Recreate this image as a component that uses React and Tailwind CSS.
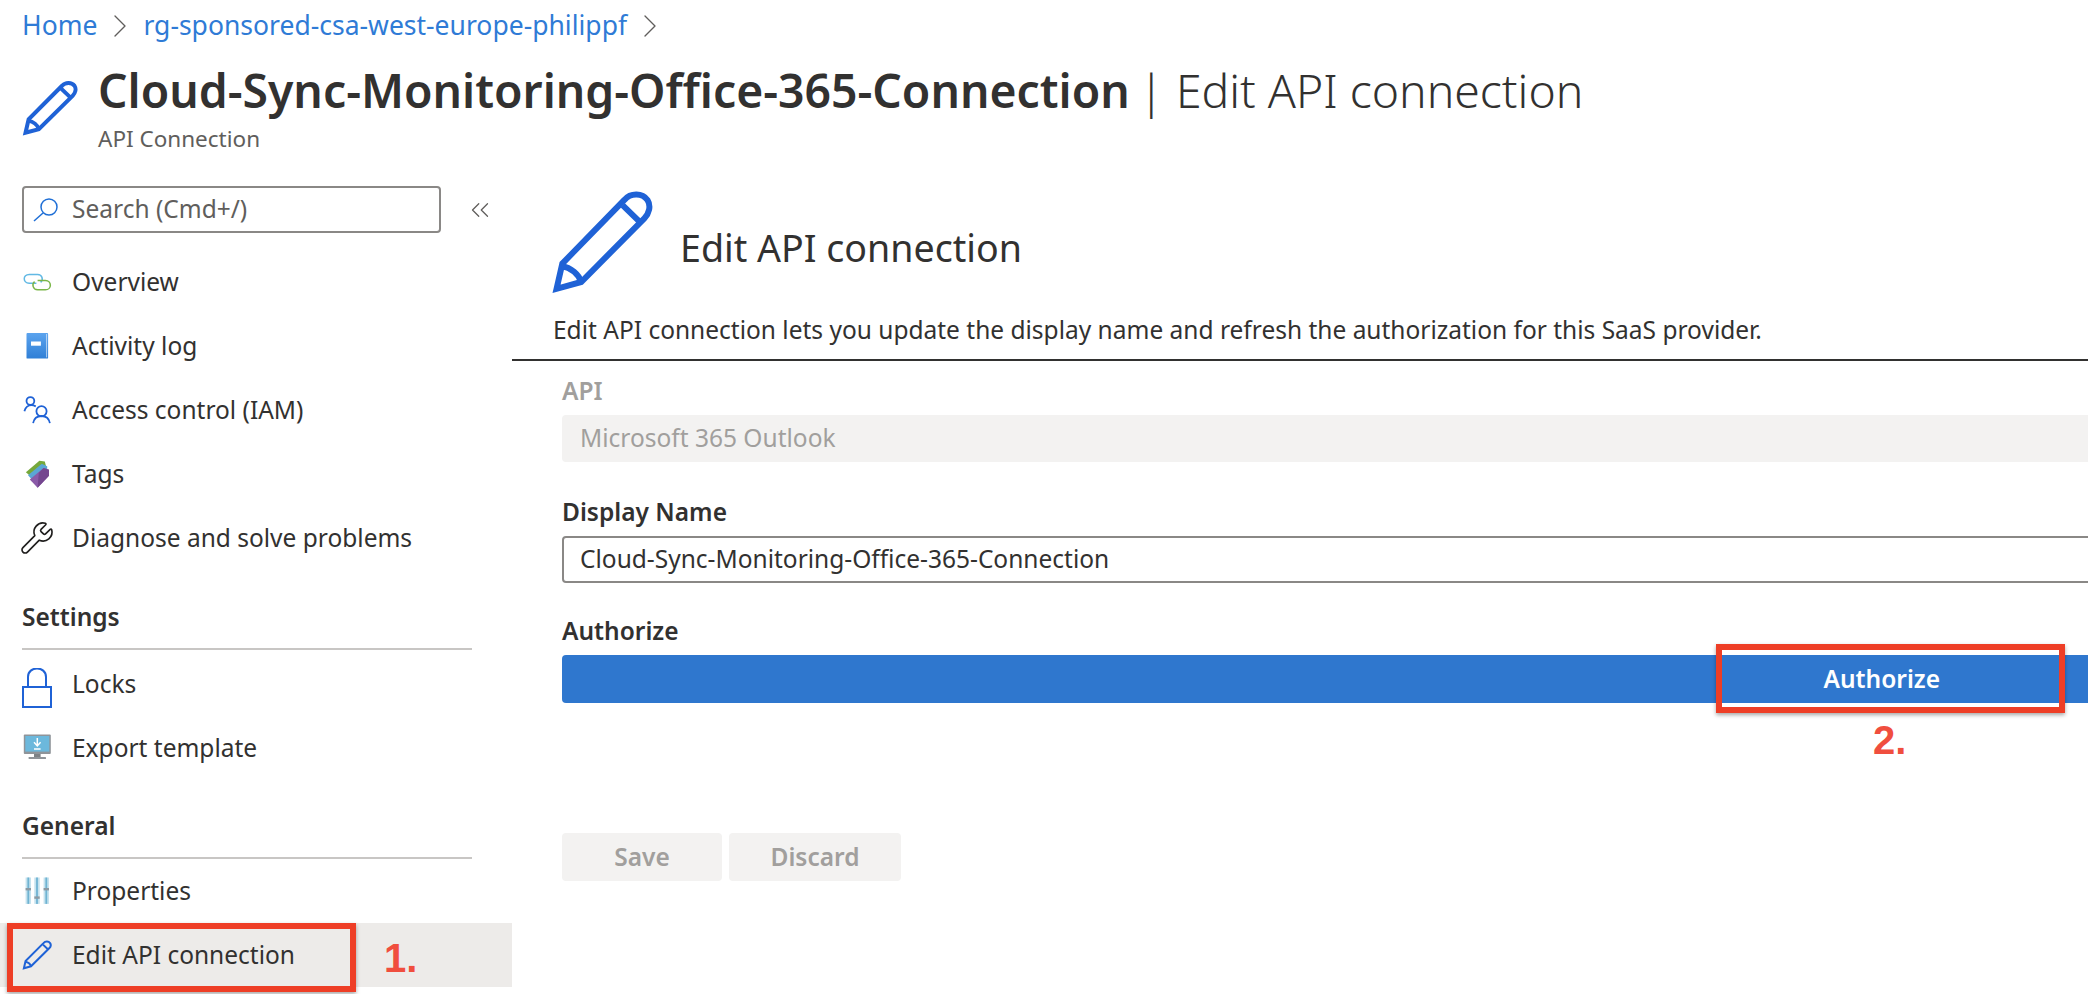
import React from 'react';
import { Wrench, ChevronRight, ChevronsLeft } from 'lucide-react';

// Pencil drawn with a non-scaling stroke so it can be reused at each size
const PencilIcon = ({ className, strokeWidth = 3 }) => (
  <svg className={className} viewBox="105 60 270 310" preserveAspectRatio="none" fill="none" stroke="#1f62d6" strokeWidth={strokeWidth} strokeLinejoin="miter">
    <path vectorEffect="non-scaling-stroke" d="M122 352 L137 278 L298 92 C315 70 345 72 358 92 C368 110 362 132 350 146 L186 332 Z" />
    <path vectorEffect="non-scaling-stroke" d="M294 108 L338 156 M135 285 C160 290 180 310 186 332" />
  </svg>
);

const LinkIcon = () => (
  <svg className="w-[30px] h-[30px]" viewBox="60 73 100 100" fill="none" strokeWidth="5">
    <path d="M108 127 H84 C62 127 62 98 84 98 H112 C128 98 132 116 122 124" stroke="#62b9e4" />
    <path d="M112 118 H138 C160 118 160 149 138 149 H112 C96 149 92 130 102 122" stroke="#7ab648" />
  </svg>
);

const BookIcon = () => (
  <svg className="w-[30px] h-[30px]" viewBox="60 265 100 100">
    <defs>
      <linearGradient id="book" x1="0" y1="0" x2="0" y2="1">
        <stop offset="0" stopColor="#5ba3ee" />
        <stop offset="1" stopColor="#2f7fd6" />
      </linearGradient>
    </defs>
    <rect x="75" y="272" width="72" height="85" rx="3" fill="url(#book)" />
    <path d="M142 275 V353" stroke="#fff" strokeWidth="2" />
    <rect x="90" y="300" width="33" height="14" fill="#fff" />
  </svg>
);

const UsersIcon = () => (
  <svg className="w-[30px] h-[30px]" viewBox="60 458 100 100" fill="none" stroke="#1f62d6" strokeWidth="6">
    <circle cx="88" cy="478" r="13" />
    <path d="M68 512 C72 498 80 492 92 492 C98 492 102 494 106 496" />
    <circle cx="125" cy="512" r="17" />
    <path d="M97 552 C100 536 110 528 125 528 C140 528 150 536 153 552" />
  </svg>
);

const TagsIcon = () => (
  <svg className="w-[30px] h-[30px]" viewBox="60 648 100 100">
    <path d="M73 692 L118 654 L136 656 L140 672 L96 712 Z" fill="#76a83a" />
    <path d="M80 702 L126 664 L144 672 L144 688 L102 726 Z" fill="#5aa6d4" />
    <path d="M86 716 L132 678 L150 684 L150 704 L112 744 Z" fill="#8a5aa8" />
    <path d="M112 744 L116 694 L132 678 L150 684 L150 704 Z" fill="#74468f" />
  </svg>
);

const LockIcon = () => (
  <svg className="w-[30px] h-10 mt-2" viewBox="66 265 90 120" fill="none" stroke="#1f62d6" strokeWidth="6">
    <rect x="69" y="322" width="84" height="60" />
    <path d="M84 322 V292 C84 258 138 258 138 292 V322" />
  </svg>
);

const ExportIcon = () => (
  <svg className="w-[30px] h-[30px]" viewBox="60 455 100 100">
    <rect x="66" y="460" width="90" height="65" rx="3" fill="#8f9499" />
    <rect x="71" y="465" width="80" height="52" fill="#6cb8dc" />
    <path d="M111 472 V496 M100 486 L111 498 L122 486 M100 508 H122" stroke="#fff" strokeWidth="5" fill="none" />
    <rect x="100" y="525" width="22" height="10" fill="#7d8286" />
    <rect x="82" y="535" width="58" height="7" rx="2" fill="#8f9499" />
  </svg>
);

const SlidersIcon = () => (
  <svg className="w-[30px] h-[30px]" viewBox="60 890 100 100">
    {[72, 101, 132].map((x, i) => (
      <g key={x}>
        <rect x={x} y="895" width="18" height="88" fill="#c5e2ee" />
        <rect x={x + 6} y="895" width="6" height="88" fill="#6fb3d2" />
        <rect x={x} y={[930, 958, 930][i]} width="18" height="8" fill="#8c9aa3" />
      </g>
    ))}
  </svg>
);

const SearchIcon = () => (
  <svg className="w-[26px] h-[24px]" viewBox="0 0 26 24" fill="none" stroke="#1f6fd6" strokeWidth="1.5">
    <circle cx="16" cy="9" r="8" />
    <path d="M10 15 L1 23" />
  </svg>
);

const NavItem = ({ icon, label, active }) => (
  <div className={`h-16 flex items-center pl-[22px] ${active ? 'bg-[#edebe9]' : ''}`}>
    <span className="w-[50px] shrink-0 flex items-center">{icon}</span>
    <span>{label}</span>
  </div>
);

const NavHeading = ({ label }) => (
  <div className="ml-[22px] mr-10 h-[51px] border-b-2 border-[#c8c6c4] font-semibold">
    {label}
  </div>
);

const Field = ({ label, className, children }) => (
  <div className={className}>
    <div className="h-10 font-semibold leading-8">{label}</div>
    {children}
  </div>
);

export default function App() {
  return (
    <div className="relative h-[994px] w-[2088px] overflow-hidden bg-white font-['Noto_Sans',sans-serif] text-[24.5px] text-[#323130]">
      {/* breadcrumb + page title */}
      <div className="h-[186px] pl-[22px]">
        <div className="h-[52px] flex items-center text-[26.5px] text-[#2f7bd6]">
          <span>Home</span>
          <ChevronRight className="w-10 h-10 mx-[3px] text-[#605e5c]" strokeWidth={0.8} />
          <span>rg-sponsored-csa-west-europe-philippf</span>
          <ChevronRight className="w-10 h-10 mx-[3px] text-[#605e5c]" strokeWidth={0.8} />
        </div>
        <div className="flex mt-[26px]">
          <PencilIcon className="w-14 h-14 mt-[2px] mr-5 shrink-0" strokeWidth={4} />
          <div className="-mt-[6px]">
            <div className="flex text-[46.3px] leading-[38px] whitespace-nowrap">
              <span className="font-semibold">Cloud-Sync-Monitoring-Office-365-Connection</span>
              <span className="font-light ml-[9px]">|</span>
              <span className="font-light ml-[12px]">Edit API connection</span>
            </div>
            <div className="text-[22.5px] text-[#605e5c] mt-[17px] leading-6">API Connection</div>
          </div>
        </div>
      </div>

      <div className="flex">
        {/* left menu */}
        <aside className="w-[512px] shrink-0">
          <div className="flex items-center pl-[22px] h-[47px]">
            <div className="w-[419px] h-[47px] border-2 border-[#8a8886] rounded-[4px] flex items-center pl-[9px] text-[#605e5c]">
              <SearchIcon />
              <span className="ml-[13px]">Search (Cmd+/)</span>
            </div>
            <ChevronsLeft className="w-[30px] h-[30px] ml-[24px] text-[#605e5c]" strokeWidth={1} />
          </div>
          <div className="mt-[17px]">
            <NavItem icon={<LinkIcon />} label="Overview" />
            <NavItem icon={<BookIcon />} label="Activity log" />
            <NavItem icon={<UsersIcon />} label="Access control (IAM)" />
            <NavItem icon={<TagsIcon />} label="Tags" />
            <NavItem icon={<Wrench className="w-9 h-9 -m-[3px] text-[#201f1e]" strokeWidth={1.1} />} label="Diagnose and solve problems" />
          </div>
          <div className="mt-[29px]">
            <NavHeading label="Settings" />
            <div className="mt-[2px]">
              <NavItem icon={<LockIcon />} label="Locks" />
              <NavItem icon={<ExportIcon />} label="Export template" />
            </div>
          </div>
          <div className="mt-[28px]">
            <NavHeading label="General" />
            <NavItem icon={<SlidersIcon />} label="Properties" />
            <NavItem icon={<PencilIcon className="w-[30px] h-[30px]" strokeWidth={2} />} label="Edit API connection" active />
          </div>
        </aside>

        {/* edit form */}
        <main className="flex-1 min-w-0">
          <div className="h-[175px] border-b-2 border-[#323130]">
            <div className="flex items-end pl-[38px] pt-[3px]">
              <PencilIcon className="w-[104px] h-[106px] shrink-0" strokeWidth={6} />
              <h1 className="ml-[26px] mb-[23px] text-[37.6px] leading-[48px]">Edit API connection</h1>
            </div>
            <p className="pl-[41px] mt-[19px] leading-8">
              Edit API connection lets you update the display name and refresh the authorization for this SaaS provider.
            </p>
          </div>
          <div className="pl-[50px] -mr-[10px]">
            <Field label="API" className="mt-[14px] text-[#a19f9d]">
              <div className="h-[47px] rounded-[4px] bg-[#f3f2f1] flex items-center pl-[18px]">Microsoft 365 Outlook</div>
            </Field>
            <Field label="Display Name" className="mt-[34px]">
              <div className="h-[47px] rounded-[4px] border-2 border-[#8a8886] flex items-center pl-[16px]">Cloud-Sync-Monitoring-Office-365-Connection</div>
            </Field>
            <Field label="Authorize" className="mt-[32px]">
              <button className="w-full h-12 rounded-[4px] bg-[#2f77ce] text-white font-semibold flex items-center justify-end pr-[158px]">Authorize</button>
            </Field>
            <div className="flex gap-[7px] mt-[130px] font-semibold text-[#a19f9d]">
              <button className="w-40 h-12 rounded-[4px] bg-[#f3f2f1]">Save</button>
              <button className="w-[172px] h-12 rounded-[4px] bg-[#f3f2f1]">Discard</button>
            </div>
          </div>
        </main>
      </div>

      {/* red annotation boxes on top of the screenshot */}
      <div className="absolute left-[7px] top-[923px] w-[349px] h-[69px] border-[6px] border-[#ee3e26] shadow-[0_2px_4px_rgba(0,0,0,0.35)]" />
      <div className="absolute left-[384px] top-[932px] text-[40px] leading-[52px] font-bold text-[#f04e3e] font-['Liberation_Sans',sans-serif]">1.</div>
      <div className="absolute left-[1716px] top-[644px] w-[349px] h-[69px] border-[6px] border-[#ee3e26] shadow-[0_2px_4px_rgba(0,0,0,0.35)]" />
      <div className="absolute left-[1873px] top-[714px] text-[40px] leading-[52px] font-bold text-[#f04e3e] font-['Liberation_Sans',sans-serif]">2.</div>
    </div>
  );
}
